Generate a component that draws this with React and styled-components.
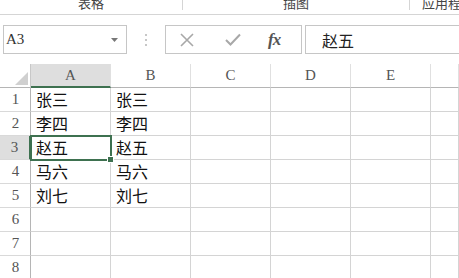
import React from "react";
import styled, { createGlobalStyle } from "styled-components";

const Global = createGlobalStyle`
  html, body { margin: 0; padding: 0; background: #fff; }
  body { overflow: hidden; }
`;

const Page = styled.div`
  width: 459px;
  height: 278px;
  overflow: hidden;
  background: #fff;
  display: flex;
  flex-direction: column;
  font-family: "Noto Sans CJK SC", "Noto Sans", sans-serif;
`;

const Ribbon = styled.div`
  height: 14px;
  flex: none;
  display: flex;
  align-items: flex-start;
  border-bottom: 1px solid #d5d5d5;
  box-sizing: content-box;
`;

const RibbonGroup = styled.div`
  width: ${(p) => p.$w}px;
  flex: ${(p) => (p.$w ? "none" : "1")};
  height: 10px;
  display: flex;
  align-items: flex-end;
  justify-content: ${(p) => (p.$left ? "flex-start" : "center")};
  padding-left: ${(p) => (p.$left ? 12 : 0)}px;
  box-sizing: border-box;
  border-right: ${(p) => (p.$last ? "none" : "1px solid #d5d5d5")};
  white-space: nowrap;
  overflow: visible;
`;

const RibbonLabel = styled.span`
  font-size: 13px;
  line-height: 13px;
  color: #444;
  margin-bottom: 1px;
`;

const FormulaBar = styled.div`
  flex: none;
  height: 49px;
  box-sizing: border-box;
  padding: 10px 0 10px 3px;
  display: flex;
  align-items: stretch;
`;

const NameBox = styled.div`
  width: 124px;
  box-sizing: border-box;
  border: 1px solid #c6c6c6;
  display: flex;
  align-items: center;
  justify-content: space-between;
  padding: 0 8px 0 2px;
  font-family: "Liberation Serif", "DejaVu Serif", serif;
  font-size: 15px;
  color: #333;
`;

const Dots = styled.div`
  width: 38px;
  display: flex;
  flex-direction: column;
  align-items: center;
  justify-content: center;
  gap: 3px;
`;

const Dot = styled.span`
  width: 2px;
  height: 2px;
  background: #b5b5b5;
  border-radius: 1px;
`;

const FxButtons = styled.div`
  width: 137px;
  box-sizing: border-box;
  border: 1px solid #c6c6c6;
  display: flex;
  align-items: center;
  padding-left: 14px;
  gap: 0;
`;

const IconSlot = styled.div`
  width: ${(p) => p.$w}px;
  display: flex;
  align-items: center;
  justify-content: flex-start;
`;

const FxText = styled.span`
  font-family: "Liberation Serif", "DejaVu Serif", serif;
  font-style: italic;
  font-weight: bold;
  font-size: 17px;
  color: #555;
  letter-spacing: -1px;
`;

const FormulaInput = styled.div`
  flex: 1;
  margin-left: 3px;
  border: 1px solid #c6c6c6;
  border-right: none;
  display: flex;
  align-items: center;
  padding-left: 16px;
  font-size: 16px;
  color: #222;
`;

const Grid = styled.div`
  flex: 1;
  display: grid;
  grid-template-columns: 31px repeat(5, 80px) 1fr;
  grid-auto-rows: 24px;
`;

const Corner = styled.div`
  border-right: 1px solid #c8c8c8;
  border-bottom: 1px solid #b5b5b5;
  display: flex;
  align-items: flex-end;
  justify-content: flex-end;
  padding: 0 2px 2px 0;
`;

const ColHead = styled.div`
  box-sizing: border-box;
  border-right: 1px solid #e0e0e0;
  border-bottom: ${(p) => (p.$sel ? "2px solid #3e7150" : "1px solid #b5b5b5")};
  background: ${(p) => (p.$sel ? "#dedede" : "#fff")};
  display: flex;
  align-items: center;
  justify-content: center;
  font-family: "Liberation Serif", "DejaVu Serif", serif;
  font-size: 15px;
  color: #555;
  padding-top: ${(p) => (p.$sel ? 1 : 0)}px;
`;

const RowHead = styled.div`
  box-sizing: border-box;
  border-right: ${(p) => (p.$sel ? "2px solid #3e7150" : "1px solid #b5b5b5")};
  border-bottom: 1px solid #d9d9d9;
  background: ${(p) => (p.$sel ? "#dedede" : "#fff")};
  display: flex;
  align-items: center;
  justify-content: center;
  font-family: "Liberation Serif", "DejaVu Serif", serif;
  font-size: 15px;
  color: #555;
  padding-left: ${(p) => (p.$sel ? 0 : 1)}px;
`;

const Cell = styled.div`
  box-sizing: border-box;
  position: relative;
  border-right: 1px solid #d4d4d4;
  border-bottom: 1px solid #d4d4d4;
  padding-left: 5px;
  font-size: 16px;
  line-height: 23px;
  color: #111;
  white-space: nowrap;
  ${(p) =>
    p.$sel &&
    `
    outline: 2px solid #3e7150;
    outline-offset: -1px;
    z-index: 2;
    &::after {
      content: "";
      position: absolute;
      right: -4px;
      bottom: -4px;
      width: 5px;
      height: 5px;
      background: #3e7150;
      border: 1px solid #fff;
    }
  `}
`;

const cols = ["A", "B", "C", "D", "E", ""];
const data = [
  ["张三", "张三"],
  ["李四", "李四"],
  ["赵五", "赵五"],
  ["马六", "马六"],
  ["刘七", "刘七"],
  ["", ""],
  ["", ""],
  ["", ""],
];

export default function App() {
  return (
    <Page>
      <Global />
      <Ribbon>
        <RibbonGroup $w={183}>
          <RibbonLabel>表格</RibbonLabel>
        </RibbonGroup>
        <RibbonGroup $w={227}>
          <RibbonLabel>插图</RibbonLabel>
        </RibbonGroup>
        <RibbonGroup $left $last>
          <RibbonLabel>应用程序</RibbonLabel>
        </RibbonGroup>
      </Ribbon>
      <FormulaBar>
        <NameBox>
          <span>A3</span>
          <svg width="7" height="4" viewBox="0 0 7 4">
            <path d="M0 0 L7 0 L3.5 4 Z" fill="#777" />
          </svg>
        </NameBox>
        <Dots>
          <Dot />
          <Dot />
          <Dot />
        </Dots>
        <FxButtons>
          <IconSlot $w={45}>
            <svg width="14" height="14" viewBox="0 0 14 14">
              <path d="M1 1 L13 13 M13 1 L1 13" stroke="#a8a8a8" strokeWidth="1.6" fill="none" />
            </svg>
          </IconSlot>
          <IconSlot $w={43}>
            <svg width="16" height="13" viewBox="0 0 16 13">
              <path d="M1 7 L5.5 11.5 L15 1.5" stroke="#a8a8a8" strokeWidth="2" fill="none" />
            </svg>
          </IconSlot>
          <IconSlot $w={25}>
            <FxText>fx</FxText>
          </IconSlot>
        </FxButtons>
        <FormulaInput>赵五</FormulaInput>
      </FormulaBar>
      <Grid>
        <Corner>
          <svg width="13" height="13" viewBox="0 0 13 13">
            <path d="M13 0 L13 13 L0 13 Z" fill="#d0d0d0" />
          </svg>
        </Corner>
        {cols.map((c, i) => (
          <ColHead key={i} $sel={c === "A"}>
            {c}
          </ColHead>
        ))}
        {data.map((row, r) => (
          <React.Fragment key={r}>
            <RowHead $sel={r === 2}>{r + 1}</RowHead>
            {cols.map((c, ci) => (
              <Cell key={ci} $sel={r === 2 && ci === 0}>
                {row[ci] || ""}
              </Cell>
            ))}
          </React.Fragment>
        ))}
      </Grid>
    </Page>
  );
}
